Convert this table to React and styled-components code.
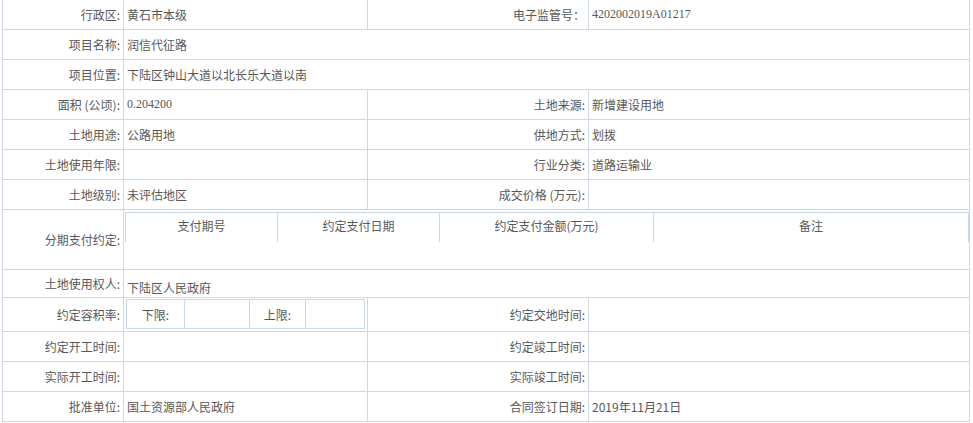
import React from "react";
import styled, { createGlobalStyle } from "styled-components";

const line = "#cfd9e6";
const innerLine = "#c6d8ea";

const GlobalStyle = createGlobalStyle`
  body {
    margin: 0;
    background: #fff;
    font-family: "Noto Sans CJK SC", "Noto Sans", sans-serif;
    font-size: 12px;
    color: #585858;
  }
`;

const Sheet = styled.div`
  margin-left: 2px;
  width: 968px;
  box-sizing: border-box;
  border-left: 1px solid ${line};
  border-right: 1px solid ${line};
`;

const Row = styled.div`
  display: grid;
  grid-template-columns: 121px 244px 221px 1fr;
  height: ${({ $h }) => $h || 30}px;
  box-sizing: border-box;
  border-bottom: 1px solid ${line};
`;

const Label = styled.div`
  display: flex;
  align-items: center;
  justify-content: flex-end;
  padding-right: 3px;
  border-right: 1px solid ${line};
  white-space: pre;
`;

const Value = styled.div`
  grid-column: span ${({ $span }) => $span || 1};
  display: flex;
  align-items: ${({ $align }) => $align || "center"};
  padding: ${({ $pad }) => $pad || "0 0 0 3px"};
  border-right: 1px solid ${line};
  white-space: nowrap;
  font-family: ${({ $serif }) =>
    $serif ? '"Liberation Serif", serif' : '"Noto Sans CJK SC", sans-serif'};

  &:last-child {
    border-right: none;
  }
`;

const PayHead = styled.div`
  display: grid;
  grid-template-columns: 152px 162px 214px 316px;
  height: 30px;
`;

const PayCell = styled.div`
  display: flex;
  justify-content: center;
  align-items: center;
  box-sizing: border-box;
  padding-bottom: 4px;
  border-top: 1px solid ${innerLine};
  border-left: 1px solid ${innerLine};

  &:last-child {
    border-right: 1px solid ${innerLine};
  }
`;

const Ratio = styled.div`
  display: grid;
  grid-template-columns: 58px 65px 56px 60px;
  height: 30px;
`;

const RatioCell = styled.div`
  display: flex;
  justify-content: center;
  align-items: center;
  box-sizing: border-box;
  border-top: 1px solid ${innerLine};
  border-bottom: 1px solid ${innerLine};
  border-left: 1px solid ${innerLine};

  &:last-child {
    border-right: 1px solid ${innerLine};
  }
`;

const payColumns = ["支付期号", "约定支付日期", "约定支付金额(万元)", "备注"];

const App = () => (
  <>
    <GlobalStyle />
    <Sheet>
      <Row>
        <Label>行政区:</Label>
        <Value>黄石市本级</Value>
        <Label>电子监管号：</Label>
        <Value $serif>4202002019A01217</Value>
      </Row>
      <Row>
        <Label>项目名称:</Label>
        <Value $span={3}>润信代征路</Value>
      </Row>
      <Row>
        <Label>项目位置:</Label>
        <Value $span={3}>下陆区钟山大道以北长乐大道以南</Value>
      </Row>
      <Row>
        <Label>面积 (公顷):</Label>
        <Value $serif>0.204200</Value>
        <Label>土地来源:</Label>
        <Value>新增建设用地</Value>
      </Row>
      <Row>
        <Label>土地用途:</Label>
        <Value>公路用地</Value>
        <Label>供地方式:</Label>
        <Value>划拨</Value>
      </Row>
      <Row>
        <Label>土地使用年限:</Label>
        <Value />
        <Label>行业分类:</Label>
        <Value>道路运输业</Value>
      </Row>
      <Row>
        <Label>土地级别:</Label>
        <Value>未评估地区</Value>
        <Label>成交价格 (万元):</Label>
        <Value />
      </Row>
      <Row $h={60}>
        <Label>分期支付约定:</Label>
        <Value $span={3} $align="flex-start" $pad="2px 0 0 1px">
          <PayHead>
            {payColumns.map(c => (
              <PayCell key={c}>{c}</PayCell>
            ))}
          </PayHead>
        </Value>
      </Row>
      <Row $h={28}>
        <Label>土地使用权人:</Label>
        <Value $span={3} $align="flex-end" $pad="0 0 1px 3px">下陆区人民政府</Value>
      </Row>
      <Row $h={34}>
        <Label>约定容积率:</Label>
        <Value $align="flex-start" $pad="1px 0 0 2px">
          <Ratio>
            <RatioCell>下限:</RatioCell>
            <RatioCell />
            <RatioCell>上限:</RatioCell>
            <RatioCell />
          </Ratio>
        </Value>
        <Label>约定交地时间:</Label>
        <Value />
      </Row>
      <Row>
        <Label>约定开工时间:</Label>
        <Value />
        <Label>约定竣工时间:</Label>
        <Value />
      </Row>
      <Row>
        <Label>实际开工时间:</Label>
        <Value />
        <Label>实际竣工时间:</Label>
        <Value />
      </Row>
      <Row>
        <Label>批准单位:</Label>
        <Value>国土资源部人民政府</Value>
        <Label>合同签订日期:</Label>
        <Value>2019年11月21日</Value>
      </Row>
    </Sheet>
  </>
);

export default App;
